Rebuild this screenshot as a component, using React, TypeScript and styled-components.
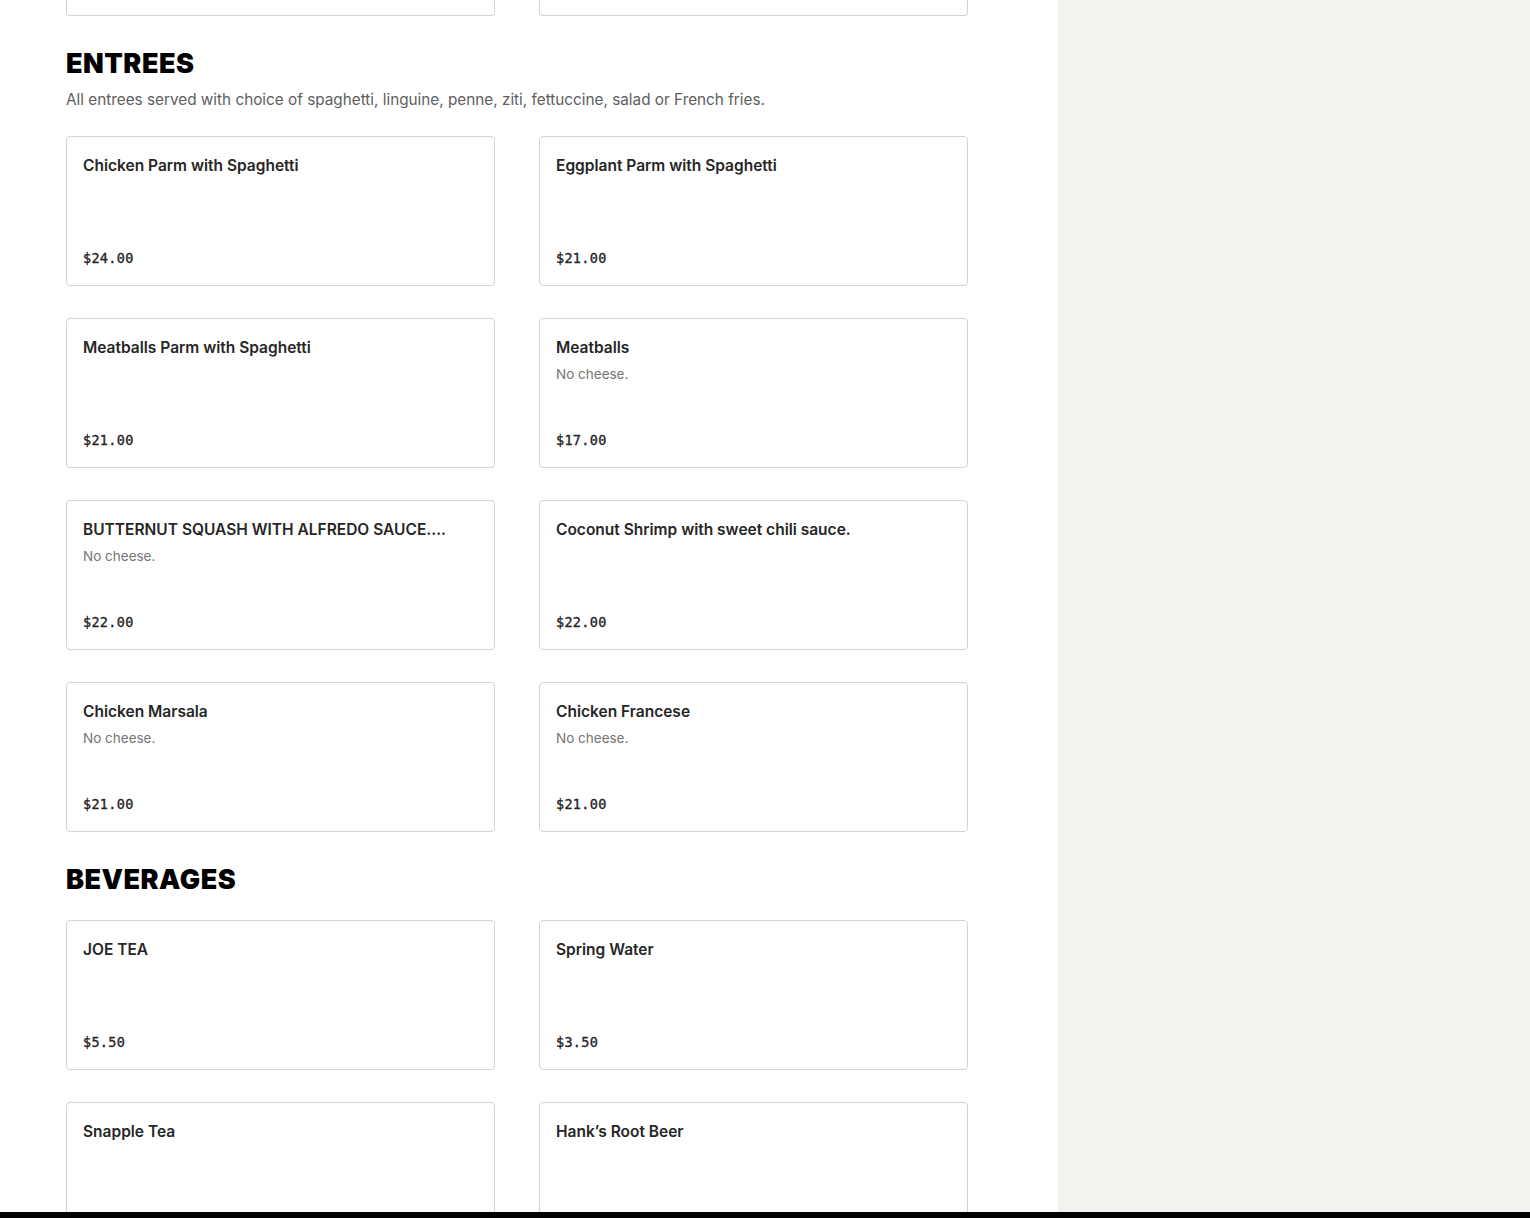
import styled, { createGlobalStyle } from "styled-components";

const GlobalStyle = createGlobalStyle`
	html, body {
		margin: 0;
		padding: 0;
		background: #ffffff;
		font-family: "Inter", "Liberation Sans", sans-serif;
		color: #2a2a2a;
	}
	* {
		box-sizing: border-box;
	}
`;

const Page = styled.div`
	display: grid;
	grid-template-columns: 1058px 1fr;
	height: 1218px;
	overflow: hidden;
`;

const Main = styled.main`
	background: #ffffff;
	padding: 0 90px 0 66px;
`;

const Aside = styled.aside`
	background: #f3f2ef;
`;

const Section = styled.section`
	margin-top: ${(p) => p.$top}px;
`;

const Heading = styled.h2`
	margin: 0;
	font-family: "Inter", "Liberation Sans", sans-serif;
	font-weight: 900;
	font-size: 27px;
	line-height: 34px;
	letter-spacing: 0.5px;
	color: #000000;
	text-transform: uppercase;
`;

const Note = styled.p`
	margin: 8px 0 0;
	font-size: 15.3px;
	line-height: 22px;
	color: #5e5e5e;
`;

const Grid = styled.div`
	display: grid;
	grid-template-columns: 429px 429px;
	column-gap: 44px;
	row-gap: 32px;
	margin-top: ${(p) => p.$top}px;
`;

const Card = styled.div`
	display: flex;
	flex-direction: column;
	height: ${(p) => (p.$clipped ? "16px" : "150px")};
	padding: ${(p) => (p.$clipped ? "0" : "19px 16px 18px")};
	border: 1px solid #d3d3d3;
	border-top: ${(p) => (p.$clipped ? "none" : "1px solid #d3d3d3")};
	border-radius: ${(p) => (p.$clipped ? "0 0 4px 4px" : "4px")};
	background: #ffffff;
`;

const Title = styled.div`
	font-size: 15.5px;
	font-weight: 600;
	line-height: 20px;
	color: #262626;
	white-space: nowrap;
	overflow: hidden;
	text-overflow: ellipsis;
`;

const Desc = styled.div`
	margin-top: 7px;
	font-size: 13.5px;
	line-height: 18px;
	color: #757575;
`;

const Price = styled.div`
	margin-top: auto;
	font-family: "DejaVu Sans Mono", "Liberation Mono", monospace;
	font-size: 13.5px;
	font-weight: 400;
	letter-spacing: 0.3px;
	-webkit-text-stroke: 0.35px #262626;
	line-height: 18px;
	color: #262626;
`;

const BottomBar = styled.div`
	position: fixed;
	left: 0;
	right: 0;
	bottom: 0;
	height: 6px;
	background: #000000;
`;

const entrees = [
	{ name: "Chicken Parm with Spaghetti", price: "$24.00" },
	{ name: "Eggplant Parm with Spaghetti", price: "$21.00" },
	{ name: "Meatballs Parm with Spaghetti", price: "$21.00" },
	{ name: "Meatballs", desc: "No cheese.", price: "$17.00" },
	{ name: "BUTTERNUT SQUASH WITH ALFREDO SAUCE....", desc: "No cheese.", price: "$22.00" },
	{ name: "Coconut Shrimp with sweet chili sauce.", price: "$22.00" },
	{ name: "Chicken Marsala", desc: "No cheese.", price: "$21.00" },
	{ name: "Chicken Francese", desc: "No cheese.", price: "$21.00" },
];

const beverages = [
	{ name: "JOE TEA", price: "$5.50" },
	{ name: "Spring Water", price: "$3.50" },
	{ name: "Snapple Tea", price: "$3.50" },
	{ name: "Hank’s Root Beer", price: "$3.50" },
];

const MenuItem = ({ item }) => (
	<Card>
		<Title>{item.name}</Title>
		{item.desc && <Desc>{item.desc}</Desc>}
		<Price>{item.price}</Price>
	</Card>
);

export default function App() {
	return (
		<>
			<GlobalStyle />
			<Page>
				<Main>
					<Grid $top={0}>
						<Card $clipped />
						<Card $clipped />
					</Grid>
					<Section $top={31}>
						<Heading>Entrees</Heading>
						<Note>
							All entrees served with choice of spaghetti, linguine, penne, ziti, fettuccine, salad or French fries.
						</Note>
						<Grid $top={25}>
							{entrees.map((item) => (
								<MenuItem key={item.name} item={item} />
							))}
						</Grid>
					</Section>
					<Section $top={31}>
						<Heading>Beverages</Heading>
						<Grid $top={23}>
							{beverages.map((item) => (
								<MenuItem key={item.name} item={item} />
							))}
						</Grid>
					</Section>
				</Main>
				<Aside />
			</Page>
			<BottomBar />
		</>
	);
}
